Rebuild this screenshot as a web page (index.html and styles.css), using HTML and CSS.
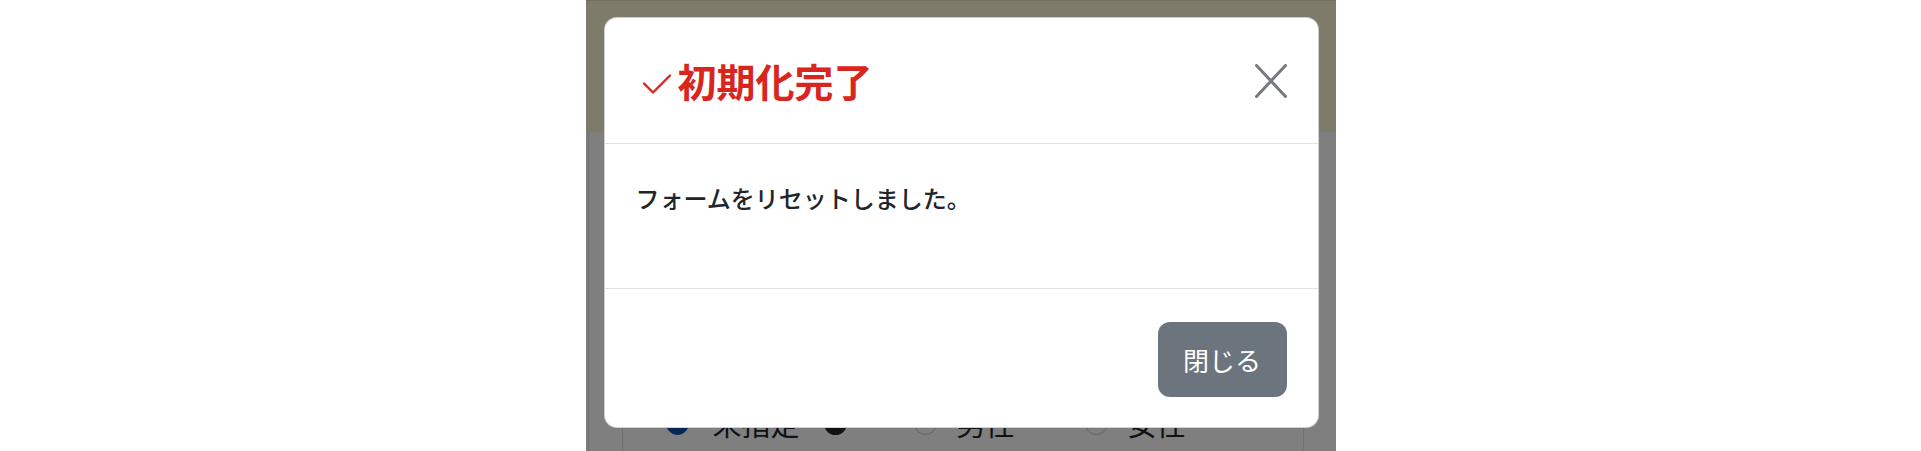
FILE: index.html
```html
<!DOCTYPE html>
<html lang="ja">
<head>
<meta charset="utf-8">
<title>初期化完了</title>
<link rel="stylesheet" href="styles.css">
</head>
<body>
<div class="frame">
  <div class="page">
    <div class="page-header"></div>
    <div class="page-main">
      <div class="panel">
        <div class="radio-row">
          <span class="radio checked"></span><span class="radio-label">未指定</span>
          <span class="dot"></span>
          <span class="radio"></span><span class="radio-label">男性</span>
          <span class="radio second"></span><span class="radio-label">女性</span>
        </div>
      </div>
    </div>
  </div>
  <div class="backdrop"></div>
  <div class="modal">
    <div class="modal-header">
      <h2 class="modal-title">
        <svg class="check" width="28" height="20" viewBox="0 0 28 20" aria-hidden="true"><path d="M1 9.5 L10 18.5 L27 1.5" fill="none" stroke="currentColor" stroke-width="2.4" stroke-linecap="round" stroke-linejoin="round"/></svg>
        <span>初期化完了</span>
      </h2>
      <button class="btn-close" aria-label="閉じる">
        <svg width="32" height="34" viewBox="0 0 32 34" aria-hidden="true"><path d="M1.5 1.5 L30.5 32.5 M30.5 1.5 L1.5 32.5" fill="none" stroke="currentColor" stroke-width="3" stroke-linecap="round"/></svg>
      </button>
    </div>
    <div class="modal-body">
      <p class="message">フォームをリセットしました。</p>
    </div>
    <div class="modal-footer">
      <button class="btn-secondary">閉じる</button>
    </div>
  </div>
</div>
</body>
</html>
```

FILE: styles.css
```css
html, body {
  margin: 0;
  padding: 0;
  background: #ffffff;
}

body {
  font-family: "Noto Sans CJK JP", "Noto Sans", sans-serif;
  color: #212529;
}

.frame {
  position: relative;
  width: 750px;
  height: 451px;
  margin: 0 auto;
  overflow: hidden;
  background: #ffffff;
}

.page-header {
  height: 132px;
  background: #fff6d6;
  border-top: 1px solid #e8dfc0;
  box-sizing: border-box;
}

.page-main {
  padding-top: 10px;
  margin-left: 2px;
  border-left: 1px solid #e4e4e4;
  height: 400px;
}

.panel {
  margin: 150px 32px 0 33px;
  border: 1px solid #dee2e6;
  border-bottom: none;
  padding: 117px 0 0 43px;
  height: 200px;
}

.radio-row {
  display: flex;
  align-items: center;
  height: 26px;
  font-size: 29px;
  color: #212529;
}

.radio {
  width: 23px;
  height: 23px;
  border-radius: 50%;
  border: 1px solid #c8ccd0;
  box-sizing: border-box;
  background: #fff;
  flex: none;
  margin-right: 20px;
}

.radio.checked {
  background: #0d4fb3;
  border-color: #0d4fb3;
  margin-right: 24px;
}

.radio.second {
  margin-left: 70px;
}

.radio-label {
  line-height: 26px;
  white-space: nowrap;
}

.dot {
  width: 23px;
  height: 23px;
  border-radius: 50%;
  background: #222;
  margin: 0 67px 0 24px;
  flex: none;
}

.backdrop {
  position: absolute;
  inset: 0;
  background: rgba(0, 0, 0, 0.5);
}

.modal {
  position: absolute;
  left: 18px;
  top: 17px;
  width: 715px;
  height: 411px;
  background: #ffffff;
  border: 1px solid rgba(0, 0, 0, 0.18);
  border-radius: 13px;
  box-sizing: border-box;
  display: flex;
  flex-direction: column;
  overflow: hidden;
}

.modal-header {
  height: 126px;
  flex: none;
  box-sizing: border-box;
  border-bottom: 1px solid #dee2e6;
  display: flex;
  align-items: center;
  justify-content: space-between;
  padding: 0 31px 0 38px;
}

.modal-title {
  margin: 0;
  display: flex;
  align-items: center;
  gap: 7px;
  font-size: 39px;
  font-weight: 700;
  line-height: 1;
  color: #d8261e;
}

.check {
  display: block;
  margin-top: 6px;
}

.btn-close {
  border: none;
  background: transparent;
  padding: 0;
  color: #777b80;
  display: block;
  cursor: pointer;
}

.btn-close svg {
  display: block;
}

.modal-body {
  height: 145px;
  flex: none;
  box-sizing: border-box;
  border-bottom: 1px solid #dee2e6;
  padding: 36px 32px 0 31px;
}

.message {
  margin: 0;
  font-size: 24px;
  font-weight: 500;
  line-height: 1.5;
  color: #212529;
}

.modal-footer {
  flex: 1;
  display: flex;
  justify-content: flex-end;
  align-items: flex-start;
  padding: 33px 31px 0 32px;
}

.btn-secondary {
  width: 129px;
  height: 75px;
  border: none;
  border-radius: 12px;
  background: #6c757d;
  color: #ffffff;
  font-family: "Noto Sans CJK JP", "Noto Sans", sans-serif;
  font-size: 26px;
  line-height: 1;
  padding: 0;
  cursor: pointer;
}
```
